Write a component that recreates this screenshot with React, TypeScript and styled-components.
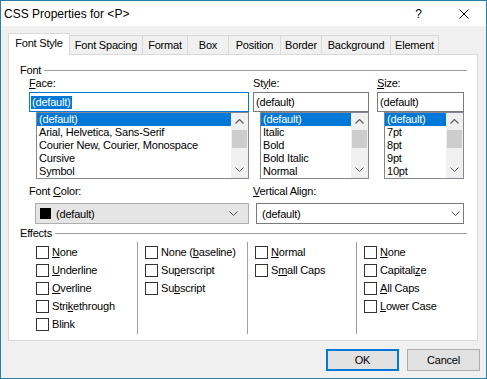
import React from 'react'
import styled, { createGlobalStyle } from 'styled-components'

const GlobalStyle = createGlobalStyle`
  html, body {
    margin: 0;
    padding: 0;
    background: #fff;
  }
  body {
    font-family: "Liberation Sans", Arial, sans-serif;
    font-size: 11px;
    letter-spacing: -0.2px;
    color: #000;
  }
  * {
    box-sizing: border-box;
  }
`

const BLUE = '#0078d7'

const Window = styled.div`
  width: 487px;
  height: 379px;
  border: 1px solid #2b7ea6;
  background: #f0f0f0;
  display: flex;
  flex-direction: column;
`

const TitleBar = styled.div`
  height: 25px;
  flex: none;
  background: #fff;
  display: flex;
  align-items: center;
  padding-left: 3px;

  .title {
    font-size: 12px;
    letter-spacing: 0;
  }
`

const TitleButton = styled.div<{ $first?: boolean }>`
  width: 45px;
  height: 25px;
  display: flex;
  align-items: center;
  justify-content: center;
  font-size: 12px;
  margin-left: ${({ $first }) => ($first ? 'auto' : '0')};
`

const Body = styled.div`
  flex: 1;
  display: flex;
  flex-direction: column;
  padding: 7px 6px 0 7px;
`

const TabRow = styled.div`
  height: 21px;
  flex: none;
  display: flex;
  align-items: flex-end;
`

const Tab = styled.div<{ $w: number; $active?: boolean; $first?: boolean }>`
  width: ${({ $w }) => $w}px;
  height: ${({ $active }) => ($active ? 22 : 19)}px;
  margin-left: ${({ $first }) => ($first ? 0 : -1)}px;
  margin-bottom: ${({ $active }) => ($active ? -1 : 0)}px;
  padding-bottom: ${({ $active }) => ($active ? 3 : 0)}px;
  border: 1px solid #d9d9d9;
  border-bottom: none;
  background: ${({ $active }) => ($active ? '#fff' : '#f0f0f0')};
  display: flex;
  align-items: center;
  justify-content: center;
  white-space: nowrap;
  position: relative;
  z-index: ${({ $active }) => ($active ? 2 : 1)};
`

const Panel = styled.div`
  width: 470px;
  height: 287px;
  flex: none;
  border: 1px solid #d9d9d9;
  background: #fff;
  padding: 9px 10px 0 11px;
  display: flex;
  flex-direction: column;
`

const GroupHeader = styled.div<{ $top?: number }>`
  height: 13px;
  line-height: 13px;
  margin-top: ${({ $top }) => $top ?? 0}px;
  display: flex;
  align-items: center;

  .line {
    flex: 1;
    height: 1px;
    background: #a0a0a0;
    margin-left: 3px;
  }
`

const FieldRow = styled.div<{ $top?: number }>`
  display: flex;
  padding-left: 9px;
  margin-top: ${({ $top }) => $top ?? 0}px;
`

const Field = styled.div<{ $w: number; $mr?: number }>`
  width: ${({ $w }) => $w}px;
  margin-right: ${({ $mr }) => $mr ?? 0}px;
  display: flex;
  flex-direction: column;
`

const Label = styled.div<{ $gap?: number }>`
  height: 13px;
  line-height: 13px;
  margin-bottom: ${({ $gap }) => $gap ?? 2}px;
  white-space: nowrap;
`

const TextInput = styled.div<{ $focused?: boolean }>`
  height: 20px;
  border: 1px solid ${({ $focused }) => ($focused ? BLUE : '#7a7a7a')};
  padding-left: ${({ $focused }) => ($focused ? 1 : 2)}px;
  display: flex;
  align-items: center;
  white-space: nowrap;

  .sel {
    background: ${BLUE};
    color: #fff;
    line-height: 13px;
    padding: 0 1px;
  }
`

const ListBox = styled.div`
  margin-left: 7px;
  height: 67px;
  border: 1px solid #828790;
  display: flex;
  overflow: hidden;
`

const Items = styled.div`
  flex: 1;
  min-width: 0;
`

const Item = styled.div<{ $selected?: boolean }>`
  height: 13px;
  line-height: 13px;
  padding-left: 2px;
  white-space: nowrap;
  background: ${({ $selected }) => ($selected ? BLUE : 'transparent')};
  color: ${({ $selected }) => ($selected ? '#fff' : '#000')};
`

const ScrollBar = styled.div`
  width: 17px;
  flex: none;
  background: #f0f0f0;
  display: flex;
  flex-direction: column;

  .arrow {
    height: 17px;
    display: flex;
    align-items: center;
    justify-content: center;
  }
  .thumb {
    height: 18px;
    margin: 0 1px;
    background: #cdcdcd;
  }
  .track {
    flex: 1;
  }
`

const Combo = styled.div<{ $gray?: boolean; $ml: number; $w: number; $pad: number; $chev: number }>`
  height: 21px;
  width: ${({ $w }) => $w}px;
  margin-left: ${({ $ml }) => $ml}px;
  border: 1px solid ${({ $gray }) => ($gray ? '#adadad' : '#7a7a7a')};
  background: ${({ $gray }) => ($gray ? '#e5e5e5' : '#fff')};
  display: flex;
  align-items: center;
  padding-left: ${({ $pad }) => $pad}px;
  padding-right: ${({ $chev }) => $chev}px;

  .swatch {
    width: 11px;
    height: 11px;
    background: #000;
    margin-right: 5px;
  }
  .value {
    flex: 1;
  }
`

const EffectsGrid = styled.div`
  margin-top: 2px;
  height: 80px;
  padding-left: 16px;
  display: grid;
  grid-template-columns: 101px 110px 109px 1fr;
`

const EffectCol = styled.div<{ $first?: boolean }>`
  border-left: ${({ $first }) => ($first ? 'none' : '1px solid #a0a0a0')};
  padding-left: ${({ $first }) => ($first ? 0 : 7)}px;
  padding-top: 2px;
`

const CheckRow = styled.div`
  height: 18px;
  display: flex;
  align-items: flex-start;
  white-space: nowrap;

  .box {
    width: 13px;
    height: 13px;
    margin-top: 2px;
    border: 1px solid #333;
    background: #fff;
    flex: none;
  }
  .text {
    margin-left: 3px;
    line-height: 16px;
  }
`

const ButtonRow = styled.div`
  margin-top: 8px;
  display: flex;
  justify-content: flex-end;
  gap: 8px;
`

const Button = styled.div<{ $default?: boolean }>`
  width: 73px;
  height: 22px;
  background: #e1e1e1;
  border: ${({ $default }) => ($default ? `2px solid ${BLUE}` : '1px solid #adadad')};
  display: flex;
  align-items: center;
  justify-content: center;
`

function ChevronUp() {
  return (
    <svg width="9" height="5" viewBox="0 0 9 5">
      <polyline points="0.5,4.5 4.5,0.5 8.5,4.5" fill="none" stroke="#606060" strokeWidth="1.2" />
    </svg>
  )
}

function ChevronDown({ color = '#606060' }: { color?: string }) {
  return (
    <svg width="9" height="5" viewBox="0 0 9 5">
      <polyline points="0.5,0.5 4.5,4.5 8.5,0.5" fill="none" stroke={color} strokeWidth="1" />
    </svg>
  )
}

function List({ items }: { items: string[] }) {
  return (
    <ListBox>
      <Items>
        {items.map((it, i) => (
          <Item key={it} $selected={i === 0}>{it}</Item>
        ))}
      </Items>
      <ScrollBar>
        <div className="arrow"><ChevronUp /></div>
        <div className="thumb" />
        <div className="track" />
        <div className="arrow"><ChevronDown /></div>
      </ScrollBar>
    </ListBox>
  )
}

type Check = { pre: string; key: string; post: string }
const c = (pre: string, key: string, post: string): Check => ({ pre, key, post })

const effectCols: Check[][] = [
  [c('', 'N', 'one'), c('', 'U', 'nderline'), c('', 'O', 'verline'), c('Stri', 'k', 'ethrough'), c('Blink', '', '')],
  [c('None (', 'b', 'aseline)'), c('Su', 'p', 'erscript'), c('Su', 'b', 'script')],
  [c('', 'N', 'ormal'), c('S', 'm', 'all Caps')],
  [c('', 'N', 'one'), c('Capitali', 'z', 'e'), c('', 'A', 'll Caps'), c('', 'L', 'ower Case')],
]

const tabs = [
  { label: 'Font Style', w: 62 },
  { label: 'Font Spacing', w: 74 },
  { label: 'Format', w: 46 },
  { label: 'Box', w: 42 },
  { label: 'Position', w: 53 },
  { label: 'Border', w: 42 },
  { label: 'Background', w: 70 },
  { label: 'Element', w: 49 },
]

export default function App() {
  return (
    <>
      <GlobalStyle />
      <Window>
        <TitleBar>
          <span className="title">CSS Properties for &lt;P&gt;</span>
          <TitleButton $first>?</TitleButton>
          <TitleButton>
            <svg width="10" height="10" viewBox="0 0 10 10">
              <path d="M0.5 0.5 L9.5 9.5 M9.5 0.5 L0.5 9.5" stroke="#000" strokeWidth="1" />
            </svg>
          </TitleButton>
        </TitleBar>
        <Body>
          <TabRow>
            {tabs.map((t, i) => (
              <Tab key={t.label} $w={t.w} $active={i === 0} $first={i === 0}>{t.label}</Tab>
            ))}
          </TabRow>
          <Panel>
            <GroupHeader>
              <span>Font</span>
              <div className="line" />
            </GroupHeader>
            <FieldRow>
              <Field $w={220} $mr={4}>
                <Label><u>F</u>ace:</Label>
                <TextInput $focused><span className="sel">(default)</span></TextInput>
                <List items={['(default)', 'Arial, Helvetica, Sans-Serif', 'Courier New, Courier, Monospace', 'Cursive', 'Symbol']} />
              </Field>
              <Field $w={116} $mr={8}>
                <Label>St<u>y</u>le:</Label>
                <TextInput>(default)</TextInput>
                <List items={['(default)', 'Italic', 'Bold', 'Bold Italic', 'Normal']} />
              </Field>
              <Field $w={87}>
                <Label><u>S</u>ize:</Label>
                <TextInput>(default)</TextInput>
                <List items={['(default)', '7pt', '8pt', '9pt', '10pt']} />
              </Field>
            </FieldRow>
            <FieldRow $top={6}>
              <Field $w={220} $mr={4}>
                <Label $gap={5}>Font <u>C</u>olor:</Label>
                <Combo $gray $ml={6} $w={214} $pad={4} $chev={10}>
                  <div className="swatch" />
                  <span className="value">(default)</span>
                  <ChevronDown color="#505050" />
                </Combo>
              </Field>
              <Field $w={211}>
                <Label $gap={5}><u>V</u>ertical Align:</Label>
                <Combo $ml={3} $w={208} $pad={5} $chev={3}>
                  <span className="value">(default)</span>
                  <ChevronDown color="#505050" />
                </Combo>
              </Field>
            </FieldRow>
            <GroupHeader $top={3}>
              <span>Effects</span>
              <div className="line" />
            </GroupHeader>
            <EffectsGrid>
              {effectCols.map((col, ci) => (
                <EffectCol key={ci} $first={ci === 0}>
                  {col.map((ch, ri) => (
                    <CheckRow key={ri}>
                      <div className="box" />
                      <span className="text">
                        {ch.pre}
                        {ch.key && <u>{ch.key}</u>}
                        {ch.post}
                      </span>
                    </CheckRow>
                  ))}
                </EffectCol>
              ))}
            </EffectsGrid>
          </Panel>
          <ButtonRow>
            <Button $default>OK</Button>
            <Button>Cancel</Button>
          </ButtonRow>
        </Body>
      </Window>
    </>
  )
}
